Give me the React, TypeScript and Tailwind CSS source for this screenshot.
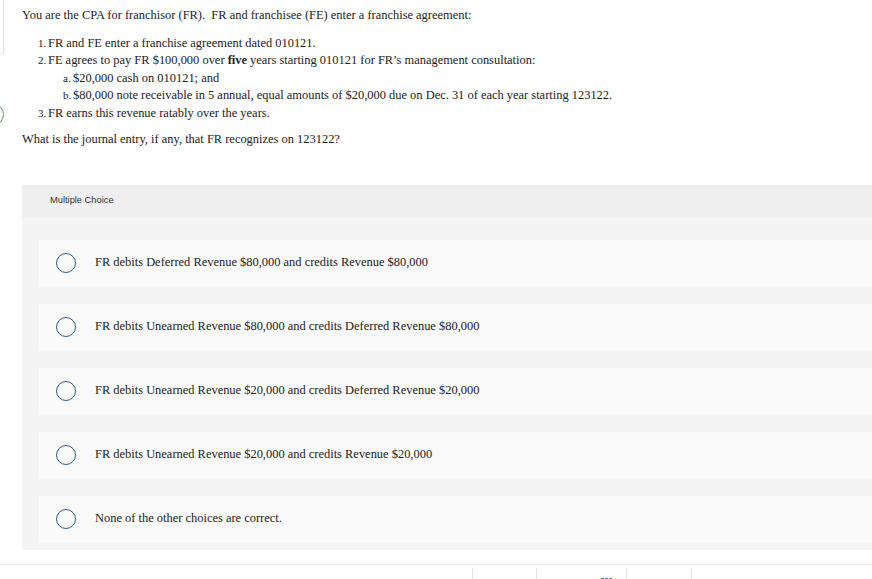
import React from 'react';

const choices = [
  'FR debits Deferred Revenue $80,000 and credits Revenue $80,000',
  'FR debits Unearned Revenue $80,000 and credits Deferred Revenue $80,000',
  'FR debits Unearned Revenue $20,000 and credits Deferred Revenue $20,000',
  'FR debits Unearned Revenue $20,000 and credits Revenue $20,000',
  'None of the other choices are correct.',
];

function Item({ marker, indent, children }: { marker: string; indent: string; children: React.ReactNode }) {
  return (
    <div className={`flex items-baseline ${indent}`}>
      <span className="w-[10px] text-[11px] shrink-0">{marker}</span>
      <span>{children}</span>
    </div>
  );
}

export default function App() {
  return (
    <div className="relative w-[872px] h-[579px] overflow-hidden bg-white text-[#222] [font-family:'Liberation_Serif','Times_New_Roman',serif] text-[12.45px] leading-[17.5px]">
      {/* cut-off card edge and marker on the left */}
      <div className="absolute left-[-20px] top-[-10px] w-[24px] h-[65px] border border-[#e2e2e2] rounded-[4px]" />
      <div className="absolute left-[-20px] top-[103px] w-[24px] h-[23px] border-[1.5px] border-[#5f9a5f] rounded-full" />

      <div className="pl-[22px] pt-[7px]">
        <p>You are the CPA for franchisor (FR).&nbsp; FR and franchisee (FE) enter a franchise agreement:</p>

        <div className="mt-[10px]">
          <Item marker="1." indent="pl-[16px]">FR and FE enter a franchise agreement dated 010121.</Item>
          <Item marker="2." indent="pl-[16px]">
            FE agrees to pay FR $100,000 over <b>five</b> years starting 010121 for FR’s management consultation:
          </Item>
          <Item marker="a." indent="pl-[41px]">$20,000 cash on 010121; and</Item>
          <Item marker="b." indent="pl-[41px]">
            $80,000 note receivable in 5 annual, equal amounts of $20,000 due on Dec. 31 of each year starting 123122.
          </Item>
          <Item marker="3." indent="pl-[16px]">FR earns this revenue ratably over the years.</Item>
        </div>

        <p className="mt-[9px]">What is the journal entry, if any, that FR recognizes on 123122?</p>

        {/* Multiple choice panel */}
        <div className="mt-[36px] w-[880px] bg-[#f4f4f4]">
          <div className="h-[33px] bg-[#efefef] flex items-center pl-[28px] [font-family:'Liberation_Sans',Arial,sans-serif] text-[9.3px] text-[#333]">
            Multiple Choice
          </div>
          <div className="pt-[22px] pb-[7px] pl-[17px] flex flex-col gap-[17px]">
            {choices.map(c => (
              <div key={c} className="h-[47px] bg-[#fafafa] flex items-center pl-[17px]">
                <span className="w-[20px] h-[20px] rounded-full border-[1.5px] border-[#2e5f8e] shrink-0" />
                <span className="ml-[19px]">{c}</span>
              </div>
            ))}
          </div>
        </div>
      </div>

      {/* bottom toolbar */}
      <div className="mt-[14px] border-t border-[#ececec] h-[20px] flex pl-[472px]">
        <div className="mt-[3px] w-[64px] border-l border-[#e6e6e6]" />
        <div className="mt-[3px] w-[90px] border-l border-[#e6e6e6] relative">
          <div className="absolute left-[64px] top-[10px] flex gap-[1px]">
            <span className="w-[3px] h-[3px] bg-[#3d7bd1]" />
            <span className="w-[3px] h-[3px] bg-[#3d7bd1]" />
            <span className="w-[3px] h-[3px] bg-[#3d7bd1]" />
          </div>
        </div>
        <div className="mt-[3px] w-[65px] border-l border-[#e6e6e6]" />
        <div className="mt-[3px] w-[65px] border-l border-[#e6e6e6]" />
      </div>
    </div>
  );
}
